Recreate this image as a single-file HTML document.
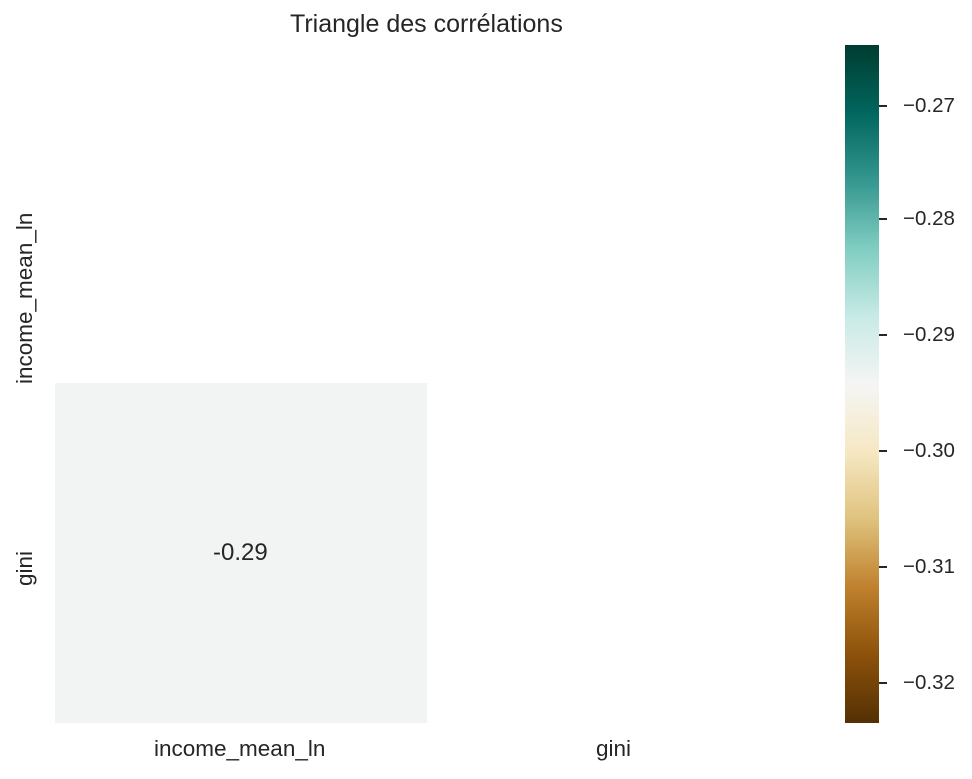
<!DOCTYPE html>
<html><head><style>
body{margin:0;width:972px;height:779px;background:#fff;position:relative;font-family:"Liberation Sans",sans-serif;color:#262626;overflow:hidden}
.t{position:absolute;white-space:nowrap;font-size:22.5px;line-height:1}
.cb{position:absolute;left:845px;top:45px;width:34px;height:678px;background:linear-gradient(to bottom,#003c30 0%,#01665e 10%,#35978f 20%,#80cdc1 30%,#c7eae5 40%,#f5f5f5 50%,#f6e8c3 60%,#dfc27d 70%,#bf812d 80%,#8c510a 90%,#543005 100%)}
.tk{position:absolute;left:879px;width:8px;height:2px;background:#262626}
.l{font-size:20.5px;left:903px}
</style></head><body>
<div class="t" style="left:290px;top:12px;font-size:25px">Triangle des corrélations</div>
<div style="position:absolute;left:55px;top:383px;width:372px;height:340px;background:#f2f4f3"></div>
<div class="t" style="left:213px;top:541px;font-size:24px">-0.29</div>
<div class="t" style="left:154px;top:738px">income_mean_ln</div>
<div class="t" style="left:596px;top:738px">gini</div>
<div class="t" style="left:14px;top:384px;transform:rotate(-90deg);transform-origin:0 0">income_mean_ln</div>
<div class="t" style="left:14px;top:586px;transform:rotate(-90deg);transform-origin:0 0">gini</div>
<div class="cb"></div>
<div class="tk" style="top:105px"></div><div class="t l" style="top:96px">−0.27</div>
<div class="tk" style="top:218px"></div><div class="t l" style="top:209px">−0.28</div>
<div class="tk" style="top:334px"></div><div class="t l" style="top:325px">−0.29</div>
<div class="tk" style="top:450px"></div><div class="t l" style="top:441px">−0.30</div>
<div class="tk" style="top:566px"></div><div class="t l" style="top:557px">−0.31</div>
<div class="tk" style="top:682px"></div><div class="t l" style="top:673px">−0.32</div>
</body></html>
